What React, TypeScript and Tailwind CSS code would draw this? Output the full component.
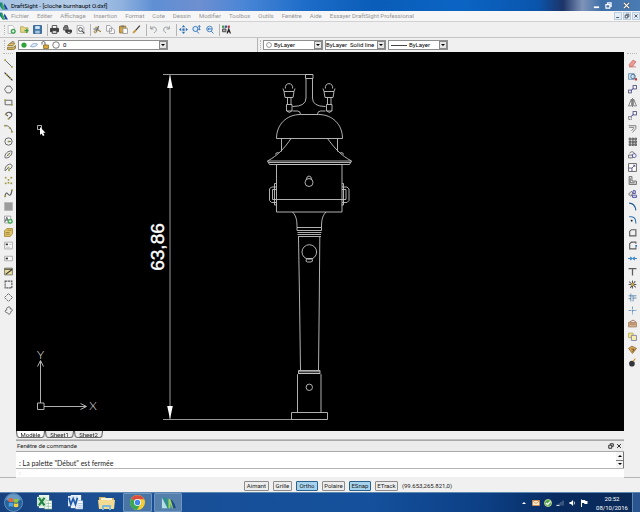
import clsx from "clsx"
import React, { useState } from "react"

type IconProps = {
  children: React.ReactNode
  className?: string
}

const Icon: React.FC<IconProps> = ({ children, className }) => (
  <svg
    viewBox="0 0 16 16"
    fill="none"
    stroke="#5c5c60"
    strokeWidth={1.6}
    className={clsx("block shrink-0", className || "size-[9px]")}
    aria-hidden="true"
  >
    {children}
  </svg>
)

type Tool = {
  label: string
  icon: React.ReactNode
}

const Dot = ({ x, y }: { x: number; y: number }) => (
  <rect x={x - 1.5} y={y - 1.5} width="3" height="3" fill="#a09a40" stroke="none" />
)

const Square = ({ x, y, size = 6 }: { x: number; y: number; size?: number }) => (
  <rect x={x} y={y} width={size} height={size} fill="#f4f4ff" stroke="#55557a" />
)

const menus = [
  "Fichier",
  "Editer",
  "Affichage",
  "Insertion",
  "Format",
  "Cote",
  "Dessin",
  "Modifier",
  "Toolbox",
  "Outils",
  "Fenêtre",
  "Aide",
  "Essayer DraftSight Professional",
]

const standardTools: Tool[][] = [
  [
    {
      label: "Nouveau",
      icon: (
        <>
          <path d="M2 1h8l3 4v10H2z" fill="#fff" stroke="#b9bcc0" />
          <circle cx="11" cy="11" r="4.5" fill="#35a04a" stroke="none" />
          <path d="M11 8.5v5M8.5 11h5" stroke="#fff" />
        </>
      ),
    },
    {
      label: "Ouvrir",
      icon: (
        <>
          <path d="M1 3h5l2 2h6v8H1z" fill="#e3d488" stroke="#b9a95c" />
          <path d="M8 10h6M11 7l3 3-3 4" stroke="#3a9b47" strokeWidth="2" />
        </>
      ),
    },
    {
      label: "Enregistrer",
      icon: (
        <>
          <path d="M1 1h14v14H1z" fill="#3f78a8" stroke="#2f5f8c" />
          <path d="M4 2h8v5H4z" fill="#d8e8f4" stroke="none" />
          <path d="M4 10h8v5H4z" fill="#a9c6dc" stroke="none" />
        </>
      ),
    },
  ],
  [
    {
      label: "Imprimer",
      icon: (
        <>
          <path d="M4 6V1h8v5" fill="#fff" stroke="#444" />
          <path d="M1 6h14v6H1z" fill="#3c3c40" stroke="#333" />
          <path d="M4 10h8v5H4z" fill="#ddd" stroke="#444" />
        </>
      ),
    },
    {
      label: "Impression par lots",
      icon: (
        <>
          <path d="M1 4h8v5H1zM3 4V1h5v3" fill="#888" stroke="#555" />
          <path d="M5 9h10v4H5z" fill="#3c3c40" stroke="#333" />
          <path d="M8 12h5v3H8z" fill="#fff" stroke="#444" />
        </>
      ),
    },
    {
      label: "Aperçu",
      icon: (
        <>
          <path d="M2 1h9l3 3v11H2z" fill="#fff" stroke="#aaa" />
          <circle cx="8" cy="8" r="3.5" fill="#e8f0f4" stroke="#555" />
          <path d="m11 11 4 4" stroke="#444" strokeWidth="2" />
        </>
      ),
    },
  ],
  [
    {
      label: "Couper",
      icon: (
        <>
          <path d="M1 7h9M10 2 6 12" stroke="#555" strokeWidth="2" />
          <path d="M4 4h4M9 9l5 3" stroke="#9a8040" strokeWidth="2" />
          <circle cx="4" cy="12" r="2" stroke="#9a8040" />
        </>
      ),
    },
    {
      label: "Copier",
      icon: <path d="M1 1h6l3 3v7H1zM6 6h6l3 3v6H6z" fill="#fff" stroke="#9a9aa0" />,
    },
    {
      label: "Coller",
      icon: (
        <>
          <path d="M1 2h11v12H1z" fill="#d5a542" stroke="#967431" />
          <path d="M4 1h5v3H4z" fill="#777" stroke="none" />
          <path d="M7 6h8v9H7z" fill="#fff" stroke="#999" />
        </>
      ),
    },
    {
      label: "Pinceau",
      icon: (
        <>
          <path d="m6 10 8-9" stroke="#333" strokeWidth="2" />
          <path d="m2 14 5-5" stroke="#c49432" strokeWidth="3" />
        </>
      ),
    },
  ],
  [
    {
      label: "Annuler",
      icon: <path d="M3 2v5h5M3 7c3-5 10-4 10 1 0 3-2 5-4 6" stroke="#8f9298" />,
    },
    {
      label: "Rétablir",
      icon: <path d="M13 2v5H8M13 7C10 2 3 3 3 8c0 3 2 5 4 6" stroke="#8f9298" />,
    },
  ],
  [
    {
      label: "Panoramique",
      icon: (
        <path
          d="M8 0l3 4H5zM8 16l3-4H5zM0 8l4-3v6zM16 8l-4-3v6zM6 6h4v4H6z"
          fill="#2b6fb5"
          stroke="none"
        />
      ),
    },
    {
      label: "Zoom dynamique",
      icon: (
        <>
          <circle cx="6" cy="7" r="4.5" fill="#dcebfa" stroke="#2b6fb5" />
          <path d="m9 11 3 4M13 1v8M11 3l2-2 2 2M11 7l2 2 2-2" stroke="#2b6fb5" />
        </>
      ),
    },
    {
      label: "Zoom précédent",
      icon: (
        <>
          <circle cx="8" cy="7" r="5" fill="#dcebfa" stroke="#4a80b5" />
          <path d="m11 11 4 4M12 7H5M7 5 5 7l2 2" stroke="#2b6fb5" />
        </>
      ),
    },
  ],
  [
    {
      label: "Propriétés",
      icon: (
        <>
          <path d="M0 1h4v4H0z" fill="#3b9b48" stroke="none" />
          <path d="M5 1h4v4H5z" fill="#3455a0" stroke="none" />
          <path d="M10 1h4v4h-4z" fill="#c33b3b" stroke="none" />
          <path d="M1 7h6v5H1z" fill="#aaa" stroke="#444" />
          <path d="m9 15 3-8 3 8M10 12h4" stroke="#222" strokeWidth="2" />
        </>
      ),
    },
  ],
]

const drawTools: Tool[] = [
  {
    label: "Ligne",
    icon: (
      <>
        <path d="M2 2l12 12" />
        <Dot x={2} y={2} />
        <Dot x={14} y={14} />
      </>
    ),
  },
  {
    label: "Ligne infinie",
    icon: (
      <>
        <path d="M1 1l14 14" stroke="#333" strokeWidth="2" />
        <Dot x={5} y={5} />
        <Dot x={11} y={11} />
      </>
    ),
  },
  { label: "Polygone", icon: <path d="M5 2h6l4 6-4 6H5L1 8z" /> },
  {
    label: "Rectangle",
    icon: (
      <>
        <path d="M2 4h12v8H2z" />
        <Dot x={2} y={4} />
        <Dot x={14} y={12} />
      </>
    ),
  },
  {
    label: "Polyligne",
    icon: (
      <>
        <path d="M3 6c3-6 11-4 11 1 0 3-3 4-6 7M3 6l4 3" strokeWidth="2" />
        <Dot x={3} y={6} />
        <Dot x={8} y={14} />
      </>
    ),
  },
  {
    label: "Arc",
    icon: (
      <>
        <path d="M1 3c7-1 12 4 13 11" />
        <Dot x={2} y={3} />
        <Dot x={10} y={7} />
        <Dot x={14} y={14} />
      </>
    ),
  },
  {
    label: "Cercle",
    icon: (
      <>
        <circle cx="8" cy="8" r="6.5" />
        <path d="M8 8h4" />
        <Dot x={8} y={8} />
      </>
    ),
  },
  {
    label: "Ellipse",
    icon: (
      <>
        <path d="M2 14C0 7 7 1 14 2c1 7-5 13-12 12z" />
        <path d="m5 11 6-6" />
        <Dot x={8} y={8} />
      </>
    ),
  },
  {
    label: "Arc elliptique",
    icon: (
      <>
        <path d="M2 14C1 7 6 2 11 2c6 1 3 9-3 9M2 14l6-6" />
        <Dot x={8} y={8} />
        <Dot x={9} y={13} />
      </>
    ),
  },
  {
    label: "Point",
    icon: (
      <>
        <Dot x={3} y={3} />
        <Dot x={8} y={7} />
        <Dot x={13} y={3} />
        <Dot x={3} y={13} />
        <Dot x={13} y={13} />
        <Dot x={8} y={12} />
      </>
    ),
  },
  {
    label: "Spline",
    icon: (
      <>
        <path d="M2 14c0-8 3-8 5-5s6 4 7-7" strokeWidth="2" />
        <Dot x={2} y={13} />
        <Dot x={14} y={2} />
      </>
    ),
  },
  { label: "Hachures", icon: <path d="M1 1h14v14H1z" fill="#9c9c9e" stroke="#b4b4b6" /> },
  {
    label: "Annotation",
    icon: (
      <>
        <path d="M1 2h11v12H1z" fill="#fff" stroke="#9a9a9a" />
        <path d="m2 12 3-8 3 8M3 9h4" stroke="#556" />
        <circle cx="11" cy="11" r="4.5" fill="#3ca34c" stroke="none" />
        <path d="M11 8.5v5M8.5 11h5" stroke="#fff" />
      </>
    ),
  },
  {
    label: "Bloc",
    icon: (
      <>
        <path d="M1 5l4-4h10v9l-4 5H1z" fill="#e0c46c" stroke="#a88a35" />
        <path d="M3 8h7M3 11h7M6 4h7" stroke="#a08538" />
      </>
    ),
  },
  {
    label: "Note",
    icon: (
      <>
        <path d="M1 2h14v12H1z" fill="#fafafa" stroke="#aaa" />
        <path d="M3 6h4" stroke="#333" strokeWidth="3" />
        <path d="M9 6h4M3 11h8" stroke="#bbb" />
      </>
    ),
  },
  {
    label: "Note simple",
    icon: (
      <>
        <path d="M1 4h14v8H1z" fill="#fafafa" stroke="#aaa" />
        <path d="M3 8h4" stroke="#333" strokeWidth="3" />
      </>
    ),
  },
  {
    label: "Tableau",
    icon: (
      <>
        <path d="M1 2h14v12H1z" fill="#eadf9c" stroke="#77776c" />
        <path d="M1 4h14M3 13 14 5" stroke="#44443c" strokeWidth="2" />
      </>
    ),
  },
  { label: "Région", icon: <path d="M2 2h12v12H2z" strokeDasharray="4 1" strokeWidth="2" /> },
  { label: "Masque", icon: <path d="M8 1l7 7-7 7-7-7z" strokeDasharray="4 1" /> },
  {
    label: "Nuage",
    icon: <path d="M7 2c4-2 5 2 4 3 5 0 5 4 1 5 0 5-4 6-6 2-5 0-5-5-1-5-1-2 0-4 2-5z" />,
  },
]

const modifyTools: Tool[] = [
  {
    label: "Supprimer",
    icon: (
      <>
        <path d="m2 10 7-8 5 3-6 8H3z" fill="#ec9c94" stroke="#c8716a" />
        <path d="M2 14h12" stroke="#c8716a" />
      </>
    ),
  },
  {
    label: "Copier",
    icon: (
      <>
        <path d="M1 3h10v10H1z" fill="#d7e6f2" stroke="#6890b2" />
        <circle cx="9" cy="8" r="4" stroke="#4d7598" />
        <path d="M12 11h4v4h-4z" fill="#c63535" stroke="none" />
      </>
    ),
  },
  {
    label: "Déplacer",
    icon: (
      <>
        <Square x={9} y={1} />
        <Square x={1} y={9} size={5} />
        <path d="m5 10 5-4" stroke="#4040b0" />
      </>
    ),
  },
  {
    label: "Miroir",
    icon: <path d="M6 2v12H1zM10 2v12h5zM8 0v16" fill="#fff" strokeWidth="1.3" />,
  },
  {
    label: "Etirer",
    icon: (
      <>
        <Square x={9} y={1} />
        <path d="M1 10h5v5H1z" strokeDasharray="2 1" />
        <path d="m5 10 5-4" stroke="#4040b0" />
      </>
    ),
  },
  { label: "Décaler", icon: <path d="M1 3h13v5l-6 7M2 6h8v2l-4 4" stroke="#777" /> },
  {
    label: "Réseau",
    icon: (
      <path
        d="M2 2h3v3H2zM7 2h3v3H7zM12 2h3v3h-3zM2 7h3v3H2zM7 7h3v3H7zM12 7h3v3h-3zM2 12h3v3H2zM7 12h3v3H7zM12 12h3v3h-3z"
        fill="#888"
      />
    ),
  },
  {
    label: "Rotation",
    icon: (
      <>
        <path d="M1 9h7v5H1zM3 6c2-4 7-4 9 1" stroke="#666" />
        <circle cx="11" cy="10" r="3.5" stroke="#5b5ba6" />
      </>
    ),
  },
  {
    label: "Echelle",
    icon: (
      <>
        <path d="M1 1h14v14H1z" fill="#fff" />
        <path d="M1 9h6v6M7 9l5-5M9 4h3v3" stroke="#55558a" />
      </>
    ),
  },
  { label: "Ajuster", icon: <path d="M2 1h5v8h8v6H2zM4 4v8h8" fill="#ddd" stroke="#666" /> },
  {
    label: "Aligner",
    icon: (
      <>
        <path d="m1 9 5-5 3 3-4 6z" fill="#ddd" stroke="#666" />
        <path d="M9 3h4v5H9zM8 11h7v4H8z" fill="#dde" stroke="#4b4ba0" />
      </>
    ),
  },
  { label: "Raccord", icon: <path d="M2 2c7 0 11 5 12 13" stroke="#1d5a94" strokeWidth="2" /> },
  {
    label: "Chanfrein",
    icon: (
      <>
        <path d="M2 3h4c5 0 8 4 8 12" stroke="#2b6fb5" strokeWidth="2" />
        <path d="M5 10h3" stroke="#222" strokeWidth="3" />
      </>
    ),
  },
  { label: "Fractionner", icon: <path d="M14 3H6L3 6v8h11z" strokeWidth="2" /> },
  {
    label: "Fractionner au point",
    icon: (
      <>
        <path d="M14 5V2H6L3 5v9h11v-3" strokeWidth="2" />
        <path d="M13 7h3v3h-3z" fill="#2b6fb5" stroke="none" />
      </>
    ),
  },
  {
    label: "Joindre",
    icon: <path d="M0 8h7M4 5l3 3-3 3M16 8H9M12 5 9 8l3 3" stroke="#3c86c8" strokeWidth="2" />,
  },
  { label: "Prolonger", icon: <path d="M1 3h14M8 3v12" strokeWidth="2.2" /> },
  {
    label: "Décomposer",
    icon: (
      <>
        <path d="m2 3 12 10M13 2 4 14M8 1v14M1 8h14" strokeWidth="1.8" />
        <circle cx="8" cy="8" r="2.5" fill="#cfa93d" stroke="none" />
      </>
    ),
  },
  {
    label: "Ajuster les bords",
    icon: <path d="M5 1v14M1 5h14M9 5v10M9 9h6M1 10h4" stroke="#5d87ad" />,
  },
  {
    label: "Découper",
    icon: <path d="M8 1v14M1 8h14" stroke="#6793bb" strokeDasharray="5 1" />,
  },
  {
    label: "Propriétés du bloc",
    icon: (
      <>
        <path d="M1 6h14v8H1z" fill="#d6b08a" stroke="#a58362" />
        <path d="M3 5 9 2l5 3M3 9h10" stroke="#a0705c" />
      </>
    ),
  },
  {
    label: "Ordre",
    icon: (
      <>
        <path d="M1 2h8v8H1z" fill="#f1e68d" stroke="#b9ad57" />
        <path d="M6 6h9v9H6z" fill="#f6efb0" stroke="#8080a8" />
      </>
    ),
  },
  {
    label: "Purger",
    icon: (
      <>
        <path d="m1 6 6-4 8 4-7 9z" fill="#d6a752" stroke="#95703a" />
        <path d="m6 7 5 1-3 4" stroke="#6c4c2a" />
      </>
    ),
  },
  {
    label: "Exploser",
    icon: (
      <>
        <circle cx="7" cy="10" r="5" fill="#34343c" stroke="none" />
        <path d="m9 6 4-5" stroke="#d19a30" strokeWidth="2" />
      </>
    ),
  },
]

const DraftSightLogo = ({ className }: { className: string }) => (
  <svg viewBox="0 0 16 16" className={clsx("block shrink-0", className)} aria-hidden="true">
    <path d="M0 1h4l6 14H5L0 8z" fill="#1a7f86" />
    <path d="M4 1 10 15H6L3 6z" fill="#41b04b" />
    <path d="m9 3 7 12h-5L8 8z" fill="#1b3fa8" />
  </svg>
)

const ToolButton = ({ tool }: { tool: Tool }) => (
  <button
    type="button"
    aria-label={tool.label}
    className="flex size-[13px] shrink-0 items-center justify-center hover:bg-[#d8e6f2]"
  >
    <Icon>{tool.icon}</Icon>
  </button>
)

const Grip = () => <span className="h-2.5 border-l border-dotted border-[#b8b8b8]" />

const SideToolbar = ({ tools, label }: { tools: Tool[]; label: string }) => (
  <div
    role="toolbar"
    aria-label={label}
    className="flex w-4 shrink-0 flex-col items-center border-b border-[#b5b5b5] bg-[#f0f0f0] pt-px"
  >
    <span className="mb-0.5 h-0.5 w-2.5 border-t border-dotted border-[#b8b8b8]" />
    {tools.map((tool) => (
      <ToolButton key={tool.label} tool={tool} />
    ))}
  </div>
)

type ComboProps = {
  label: string
  options: string[]
  className: string
  children?: React.ReactNode
}

const Combo: React.FC<ComboProps> = ({ label, options, className, children }) => (
  <label className={clsx("flex h-2.5 items-center border border-[#8e8f8f] bg-white", className)}>
    {children}
    <select
      aria-label={label}
      className="h-2 min-w-0 flex-1 appearance-none bg-transparent leading-2 text-black outline-none"
    >
      {options.map((option) => (
        <option key={option}>{option}</option>
      ))}
    </select>
    <span className="flex h-full w-2 shrink-0 items-center justify-center border border-[#8a8a8a] bg-[#e6e6e6]">
      <svg viewBox="0 0 4 2" className="w-1" aria-hidden="true">
        <path d="M0 0h4L2 2z" />
      </svg>
    </span>
  </label>
)

const TitleBar = () => (
  <header className="flex h-[11px] items-center bg-[linear-gradient(90deg,#a3c1e2_0%,#b4cde8_12%,#8fb2de_19%,#5f8fd4_24%,#6e8fd0_31%,#4a86d6_38%,#1c6cc8_48%,#0a5db8_58%,#0b64c4_72%,#0a55ac_84%,#1d3468_88%,#7f93b8_91%,#3f6fa8_94%,#4a7cb4_100%)] text-black">
    <DraftSightLogo className="size-2" />
    <h1 className="ml-[3px] flex-1">DraftSight - [cloche burnhaupt O.dxf]</h1>
    <div className="flex h-full text-white">
      <button type="button" aria-label="Réduire" className="flex w-3 items-center justify-center">
        <Icon className="size-[7px]">
          <path d="M2 12h12" stroke="#fff" strokeWidth="4" />
        </Icon>
      </button>
      <button type="button" aria-label="Restaurer" className="flex w-3 items-center justify-center">
        <Icon className="size-[7px]">
          <path d="M6 5V2h8v8h-3M2 6h9v8H2z" stroke="#fff" strokeWidth="2.5" />
        </Icon>
      </button>
      <button type="button" aria-label="Fermer" className="mr-0.5 flex w-6 items-center justify-center">
        <Icon className="size-[7px]">
          <path d="m2 2 12 12M14 2 2 14" stroke="#3d4a60" strokeWidth="6" />
          <path d="m2 2 12 12M14 2 2 14" stroke="#fff" strokeWidth="3" />
        </Icon>
      </button>
    </div>
  </header>
)

const childWindowButtons = [
  { label: "Réduire le dessin", path: "M3 12h8" },
  { label: "Restaurer le dessin", path: "M6 5V3h7v7h-2M3 6h7v7H3z" },
  { label: "Fermer le dessin", path: "m4 4 8 8M12 4l-8 8" },
]

const MenuBar = () => (
  <nav className="flex h-[11px] items-center border-b border-[#d2d2d2] bg-[#f6f6f6]">
    <DraftSightLogo className="size-2" />
    <ul className="ml-[3px] flex flex-1 gap-2 text-[#959595]">
      {menus.map((menu) => (
        <li key={menu}>
          <button type="button" className="block whitespace-nowrap">
            {menu}
          </button>
        </li>
      ))}
    </ul>
    <div className="flex gap-px">
      {childWindowButtons.map(({ label, path }) => (
        <button
          key={label}
          type="button"
          aria-label={label}
          className="flex size-2 items-center justify-center border border-[#bccddd] bg-[#e4eef8]"
        >
          <Icon className="size-1.5">
            <path d={path} stroke="#4a5562" strokeWidth="2.5" />
          </Icon>
        </button>
      ))}
    </div>
  </nav>
)

const StandardToolbar = () => (
  <div
    role="toolbar"
    aria-label="Standard"
    className="flex h-4 items-center border-b border-[#c4c4c4] pl-1"
  >
    <Grip />
    {standardTools.map((group, index) => (
      <div
        key={group[0].label}
        className={clsx("flex h-3 items-center", index > 0 && "ml-[3px] border-l border-[#b4b4b4]")}
      >
        {group.map((tool) => (
          <ToolButton key={tool.label} tool={tool} />
        ))}
      </div>
    ))}
  </div>
)

const LayerBar = () => (
  <div className="flex h-3.5 items-center">
    <div className="flex h-full w-[258px] shrink-0 items-center border-r border-[#b4b4b4] pl-1">
      <Grip />
      <button type="button" aria-label="Gestionnaire de calques" className="mr-0.5 ml-0.5">
        <Icon>
          <path d="m1 8 4-4h9l-3 4z" fill="#e2c46a" stroke="#9c8038" />
          <path d="M1 11h11l3-3v5l-3 2H1z" fill="#d2b565" stroke="#8c7434" />
          <path d="M6 4 9 1l4 1" stroke="#665a36" />
        </Icon>
      </button>
      <Combo label="Calque actif" options={["0"]} className="w-[150px] gap-[3px] pl-0.5">
        <Icon className="size-1.5">
          <circle cx="8" cy="8" r="7" fill="#2fa33c" stroke="none" />
        </Icon>
        <Icon className="size-2">
          <path d="M1 11c2-6 8-7 14-5-2 5-8 7-14 5z" fill="#e4eefa" stroke="#7c9ac2" />
        </Icon>
        <Icon className="size-2">
          <path d="M5 8h10v7H5z" fill="#d8a73c" stroke="#8c6c28" />
          <path d="M8 8V4c0-4-6-4-6 0v3" strokeWidth="2" />
        </Icon>
        <Icon className="size-2">
          <circle cx="8" cy="8" r="6.5" />
        </Icon>
      </Combo>
    </div>
    <div className="flex items-center gap-0.5 pl-0.5">
      <Grip />
      <Combo label="Couleur de ligne" options={["ByLayer"]} className="w-[60px] gap-0.5 pl-0.5">
        <Icon className="size-1.5">
          <circle cx="8" cy="8" r="6.5" />
        </Icon>
      </Combo>
      <Combo
        label="Style de ligne"
        options={["ByLayer\u00a0\u00a0Solid line"]}
        className="w-[61px]"
      />
      <Combo label="Epaisseur de ligne" options={["ByLayer"]} className="w-[60px] gap-0.5 pl-0.5">
        <span className="w-4 border-t border-[#444]" />
      </Combo>
    </div>
  </div>
)

const LampHead = ({ x }: { x: number }) => (
  <g>
    <path d={`M${x - 6} 88.500l1 3h10l1-3`} />
    <path d={`M${x - 5} 91.500l1 6h8l1-6`} />
    <path d={`M${x - 3.5} 88.500a3.700 3.700 0 1 1 7 0`} />
    <path d={`M${x - 1.5} 97.500v7M${x + 2} 97.500v7`} />
    <path d={`M${x - 2.5} 104.500h5.500v6.500h-5.500zM${x - 2} 111q2.500 3 4.500 0`} />
  </g>
)

const Drawing = () => (
  <svg
    viewBox="16 52 608 379"
    className="block w-full bg-black font-['Liberation_Sans',sans-serif]"
    fill="none"
    stroke="#c4c4c4"
    strokeWidth="0.9"
    role="img"
    aria-label="Dessin : cloche burnhaupt"
  >
    {/* dimension */}
    <path d="M163 74.500h150M163 419.500h129M170 75v344" stroke="#a8a8a8" />
    <path d="M170 75l-2.800 13h5.600zM170 419l-2.800-13h5.600z" fill="#fff" stroke="none" />
    <text
      transform="translate(164 247) rotate(-90)"
      textAnchor="middle"
      fontSize="19"
      fill="#fff"
      stroke="#fff"
      strokeWidth="0.4"
    >
      63,86
    </text>

    {/* post and lamps */}
    <path d="M305.500 74.500h7.500v4h-7.500z" />
    <path d="M306 78.500V98q0 8.500-13.500 8.500M312.500 78.500V98q0 8.500 13 8.500" />
    <path d="M292.500 111h5q3 0 3 3.500M325.500 111h-5q-3 0-3 3.500" />
    <LampHead x={289} />
    <LampHead x={329} />

    {/* bell and roof */}
    <path d="M276.500 138.500c0-14 10-24 24-24h18c14 0 24 10 24 24z" />
    <path d="M281.500 138.500v13M337.500 138.500v13" />
    <path d="M291 138.500c-6 9-13 17-23.500 22.500l2 3.500h80l2-3.500c-10.500-5.500-17.500-13.500-24-22.500" />
    <path d="M267.500 161h84M268.500 162.500h82" />
    <path d="M275.500 154.500q0-2 3-2M343.500 154.500q0-2-3-2" />

    {/* housing */}
    <path d="M276.500 164.500h65.500v47.500h-65.500zM276.500 199.500h65.500" />
    <circle cx="309" cy="182.500" r="4" />
    <path d="M306.500 179.500q0-3.500 2.500-3.500t2.500 3.500" />
    <path d="M276.500 187h-5l-2 2v11.500l2 2h5M276.500 189.500h-4v10h4M276 183.500h-1.500v21.500h2" />
    <path d="M342 187h5l2 2v11.500l-2 2h-5M342 189.500h4v10h-4M342 183.500h1.500v21.500h-2" />

    {/* neck */}
    <path d="M292.500 212c4 4 4.500 9 4.500 15.500h24.500c0-6.500.500-11.500 4.500-15.500" />
    <path d="M297 227.500v3h24.500v-3M297.500 232.500h24M297.500 234.500h23.500M298 236.500h23" />

    {/* column */}
    <path d="M298.500 237l1 60 1 73.500M319.800 237l-.500 60-.800 73.500" />
    <circle cx="309.300" cy="252" r="7.300" />
    <path d="M306.500 258.500q-1.500 3.500 1 3.500h3.500q2.500 0 1-3.500z" />
    <path d="M298.500 370.500h21.500v3h-21.500zM298.500 371.800h21.500" />
    <path d="M297.500 412.500v-38l1-1h21.500l1 1v38" />
    <circle cx="309.300" cy="387.300" r="3.200" />
    <path d="M291.500 412.500h36v7h-36z" />

    {/* coordinate system */}
    <path d="M37.500 403h6.500v6.500h-6.500zM40.500 403v-42M37.500 366.500l3-6 3 6M44 406.500h42M80.500 403.500l6 3-6 3" />
    <g
      className="font-['Lato',sans-serif] font-light"
      fontSize="12"
      fill="#e4e4e4"
      stroke="none"
      textAnchor="middle"
    >
      <text x="40.500" y="359">Y</text>
      <text x="93" y="410">X</text>
    </g>

    {/* pointer */}
    <path d="M37.500 125.500h4v4h-4z" />
    <path d="M40 127v8l1.600-1.500 1.300 2.500 1.600-.800-1.300-2.500h2.300z" fill="#fff" stroke="none" />
  </svg>
)

const SheetTabs = () => {
  const [active, setActive] = useState("Modèle")

  return (
    <div role="tablist" className="flex h-[9px] border-b border-[#c0c0c0] bg-[#f0f0f0]">
      {["Modèle", "Sheet1", "Sheet2"].map((name) => (
        <button
          key={name}
          type="button"
          role="tab"
          aria-selected={name === active}
          onClick={() => setActive(name)}
          className={clsx(
            "relative isolate h-2 w-[29px] before:absolute before:inset-x-0 before:top-0 before:-z-10 before:h-2 before:origin-top before:rounded-b-[3px] before:border before:border-t-0 before:border-[#555] before:[transform:perspective(40px)_rotateX(-20deg)]",
            name === active ? "before:bg-white" : "before:bg-[#ececec]"
          )}
        >
          {name}
        </button>
      ))}
    </div>
  )
}

const CommandWindow = () => (
  <section aria-labelledby="command-title">
    <div className="flex h-3 items-center border-y border-[#a9a9a9] bg-[#ececec] pr-0.5 pl-px">
      <h2 id="command-title" className="flex-1">
        Fenêtre de commande
      </h2>
      <div className="flex gap-0.5">
        <button type="button" aria-label="Détacher">
          <Icon className="size-1.5">
            <path d="M6 5V2h8v7h-3M2 6h8v8H2z" stroke="#222" strokeWidth="2.5" />
          </Icon>
        </button>
        <button type="button" aria-label="Fermer la fenêtre de commande">
          <Icon className="size-1.5">
            <path d="m3 3 10 10M13 3 3 13" stroke="#222" strokeWidth="2.5" />
          </Icon>
        </button>
      </div>
    </div>
    <div className="flex h-[17px] border-b border-[#b5b5b5] bg-white">
      <p className="flex-1 self-end pb-px pl-[3px] font-['Lato',sans-serif] text-[7px]">
        : La palette "Début" est fermée
      </p>
      <div className="flex w-2 flex-col">
        <button
          type="button"
          aria-label="Défiler vers le haut"
          className="flex flex-1 items-center justify-center border-r border-b border-[#777] bg-[#f4f4f4]"
        >
          <svg viewBox="0 0 4 2" className="w-1" aria-hidden="true">
            <path d="M0 2h4L2 0z" />
          </svg>
        </button>
        <button
          type="button"
          aria-label="Défiler vers le bas"
          className="flex flex-1 items-center justify-center border-r border-[#777] bg-[#f4f4f4]"
        >
          <svg viewBox="0 0 4 2" className="w-1" aria-hidden="true">
            <path d="M0 0h4L2 2z" />
          </svg>
        </button>
      </div>
    </div>
    <label className="flex h-2 items-center bg-white pl-[3px]">
      <span className="text-[#777]">:</span>
      <input aria-label="Commande" className="h-2 min-w-0 flex-1 bg-transparent outline-none" />
    </label>
  </section>
)

const modes = [
  { name: "Aimant", className: "w-[25px]" },
  { name: "Grille", className: "w-[19px]" },
  { name: "Ortho", className: "w-[22px]" },
  { name: "Polaire", className: "w-[23px]" },
  { name: "ESnap", className: "w-[22px]" },
  { name: "ETrack", className: "w-[23px]" },
]

const StatusBar = () => {
  const [enabled, setEnabled] = useState(["Ortho", "ESnap"])

  const toggle = (name: string) =>
    setEnabled((current) =>
      current.includes(name) ? current.filter((n) => n !== name) : [...current, name]
    )

  return (
    <div className="flex h-3.5 items-center justify-center gap-1 pt-px pl-14">
      {modes.map(({ name, className }) => (
        <button
          key={name}
          type="button"
          aria-pressed={enabled.includes(name)}
          onClick={() => toggle(name)}
          className={clsx(
            "h-2.5 rounded-[1px] border leading-2",
            className,
            enabled.includes(name)
              ? "border-[#2c628b] bg-[#a5d3ee]"
              : "border-[#8c8c8c] bg-[#ededed]"
          )}
        >
          {name}
        </button>
      ))}
      <span>(99.653,265.821,0)</span>
    </div>
  )
}

const Taskbar = () => (
  <footer className="flex h-5 items-center border-t border-[#5f88b0] bg-[linear-gradient(90deg,#17407e_0%,#1b4f93_15%,#17509a_40%,#14509c_58%,#0c3f84_76%,#082a5e_88%,#0a2a58_100%)] text-white">
    <button type="button" aria-label="Démarrer" className="ml-1">
      <svg viewBox="0 0 20 20" className="block size-[19px]" aria-hidden="true">
        <circle cx="10" cy="10" r="9.5" fill="#27629c" stroke="#6fa4cc" strokeWidth="0.8" />
        <path d="M2 7a8.500 8.500 0 0 1 16 0q-8 4-16 0z" fill="#86b2d4" opacity="0.7" />
        <path d="M5 6q2-1.500 4.500-.300v4Q7 8.500 5 9.700z" fill="#e8633a" />
        <path d="M10.300 6q2.500 1 4.700-.200v4q-2.500 1-4.700 0z" fill="#8cc63f" />
        <path d="M5 10.500q2-1 4.500 0v4q-2.500-1-4.500.200z" fill="#4aa3e0" />
        <path d="M10.300 10.800q2.500 1 4.700 0v3.700q-2.500 1-4.700 0z" fill="#f8cf3c" />
      </svg>
    </button>
    <div className="ml-[14px] flex flex-1 items-center">
      <button type="button" aria-label="Excel" className="mr-4">
        <svg viewBox="0 0 16 16" className="block size-[15px]" aria-hidden="true">
          <path d="M2 0h11v14H2z" fill="#e9f4ea" />
          <path d="M9 6h7v9H8z" fill="#fff" stroke="#7db388" strokeWidth="0.7" />
          <path d="M9 9h6M9 12h6M12 7v8" stroke="#7db388" strokeWidth="0.7" />
          <path d="M0 2h10v10H0z" fill="#cde6cf" />
          <path d="m2 3 6 8M8 3l-6 8" stroke="#218341" strokeWidth="2.2" />
        </svg>
      </button>
      <button type="button" aria-label="Word" className="mr-[15px]">
        <svg viewBox="0 0 16 16" className="block size-[15px]" aria-hidden="true">
          <path d="M3 0h11v14H3z" fill="#eef4fb" />
          <path d="M9 6h7v9H8z" fill="#fff" stroke="#7d9cc8" strokeWidth="0.7" />
          <path d="M10 9h5M10 11h5M10 13h5" stroke="#7d9cc8" strokeWidth="0.7" />
          <path d="M0 1h11v11H0z" fill="#dce8f6" />
          <path d="m1 3 2 7 2.500-6L8 10l2-7" fill="none" stroke="#1d57a8" strokeWidth="1.8" />
        </svg>
      </button>
      <button type="button" aria-label="Explorateur" className="mr-2">
        <svg viewBox="0 0 17 16" className="block h-4 w-[17px]" aria-hidden="true">
          <path d="M1 2h6l1 1h8v11H1z" fill="#d8b75c" />
          <path d="M3 3h11v4H3z" fill="#f8f3dc" />
          <path d="M0 5h17l-1 9H1z" fill="#f3dc92" />
          <path d="M4 15v-4q0-1 1-1h7q1 0 1 1v4h-2v-3H6v3z" fill="#7db9dd" />
        </svg>
      </button>
      <button
        type="button"
        aria-label="Chrome"
        className="mr-0.5 flex h-[19px] w-[29px] items-center justify-center rounded-[1px] border border-[#6d97c2] bg-[#4974a6]"
      >
        <svg viewBox="0 0 16 16" className="block size-[15px]" aria-hidden="true">
          <circle cx="8" cy="8" r="8" fill="#f5cd35" />
          <path d="M8 8 1.100 4A8 8 0 0 1 15 4.500H8z" fill="#dd4b3e" />
          <path d="M1.100 4A8 8 0 0 0 7.500 16L11 9.800 8 8z" fill="#3aa757" />
          <circle cx="8" cy="8" r="3.7" fill="#fff" />
          <circle cx="8" cy="8" r="2.9" fill="#4388e8" />
        </svg>
      </button>
      <button
        type="button"
        aria-label="DraftSight"
        className="flex h-[19px] w-7 items-center justify-center rounded-[1px] border border-[#6d97c2] bg-[#5580ad]"
      >
        <svg viewBox="0 0 16 16" className="block size-[15px]" aria-hidden="true">
          <path d="M1 3 7 14H1z" fill="#b4e0e4" />
          <path d="m2 2 4 1 3 11H7z" fill="#2a938c" />
          <path d="M8 14V4q3 0 4 4l3 6h-3l-2-5v5z" fill="#9bd65c" />
          <path d="M10 4q4 3 6 10h-3z" fill="#1d4c88" />
        </svg>
      </button>
    </div>
    <div className="flex items-center gap-1">
      <Icon className="size-2">
        <path d="M4 10h8L8 6z" fill="#fff" stroke="none" />
      </Icon>
      <Icon className="size-2">
        <path d="M1 3h14v10H1z" fill="#f4ead8" stroke="#d98a3c" />
        <path d="m1 4 7 5 7-5" stroke="#d98a3c" />
      </Icon>
      <Icon className="size-2">
        <circle cx="8" cy="8" r="7" fill="#4aa84a" stroke="#e8e6a0" />
        <path d="m4 8 3 3 6-6" stroke="#fff" strokeWidth="2.5" />
      </Icon>
      <Icon className="size-2">
        <path d="M1 13h2v-2H1zM5 13h2V9H5zM9 13h2V6H9zM13 13h2V3h-2z" fill="#6b7f9c" stroke="none" />
        <path d="M1 13h6" stroke="#fff" />
      </Icon>
      <Icon className="size-2">
        <path d="M3 6h3l4-4v12l-4-4H3z" fill="#fff" stroke="none" />
        <path d="M12 5q2 3 0 6" stroke="#fff" />
      </Icon>
      <Icon className="size-2">
        <path d="M3 1v15" stroke="#fff" strokeWidth="2" />
        <path d="M4 2h6l1 2h4v6H9L8 8H4z" fill="#fff" stroke="none" />
      </Icon>
    </div>
    <div className="ml-2 w-8 text-center leading-[9px]">
      <p>20:52</p>
      <p>08/10/2016</p>
    </div>
    <button
      type="button"
      aria-label="Afficher le bureau"
      className="ml-1 h-full w-2 border-l border-[#5f86b4] bg-[#2a5590]"
    />
  </footer>
)

const App = () => (
  <div className="flex min-h-screen flex-col bg-[#f0f0f0] font-['Roboto','Liberation_Sans',sans-serif] text-[6px] leading-2 text-[#1c1c1c]">
    <TitleBar />
    <MenuBar />
    <StandardToolbar />
    <LayerBar />
    <div className="flex flex-1">
      <SideToolbar tools={drawTools} label="Dessin" />
      <main className="min-w-0 flex-1">
        <Drawing />
        <SheetTabs />
        <CommandWindow />
      </main>
      <SideToolbar tools={modifyTools} label="Modifier" />
    </div>
    <StatusBar />
    <Taskbar />
  </div>
)

export default App
